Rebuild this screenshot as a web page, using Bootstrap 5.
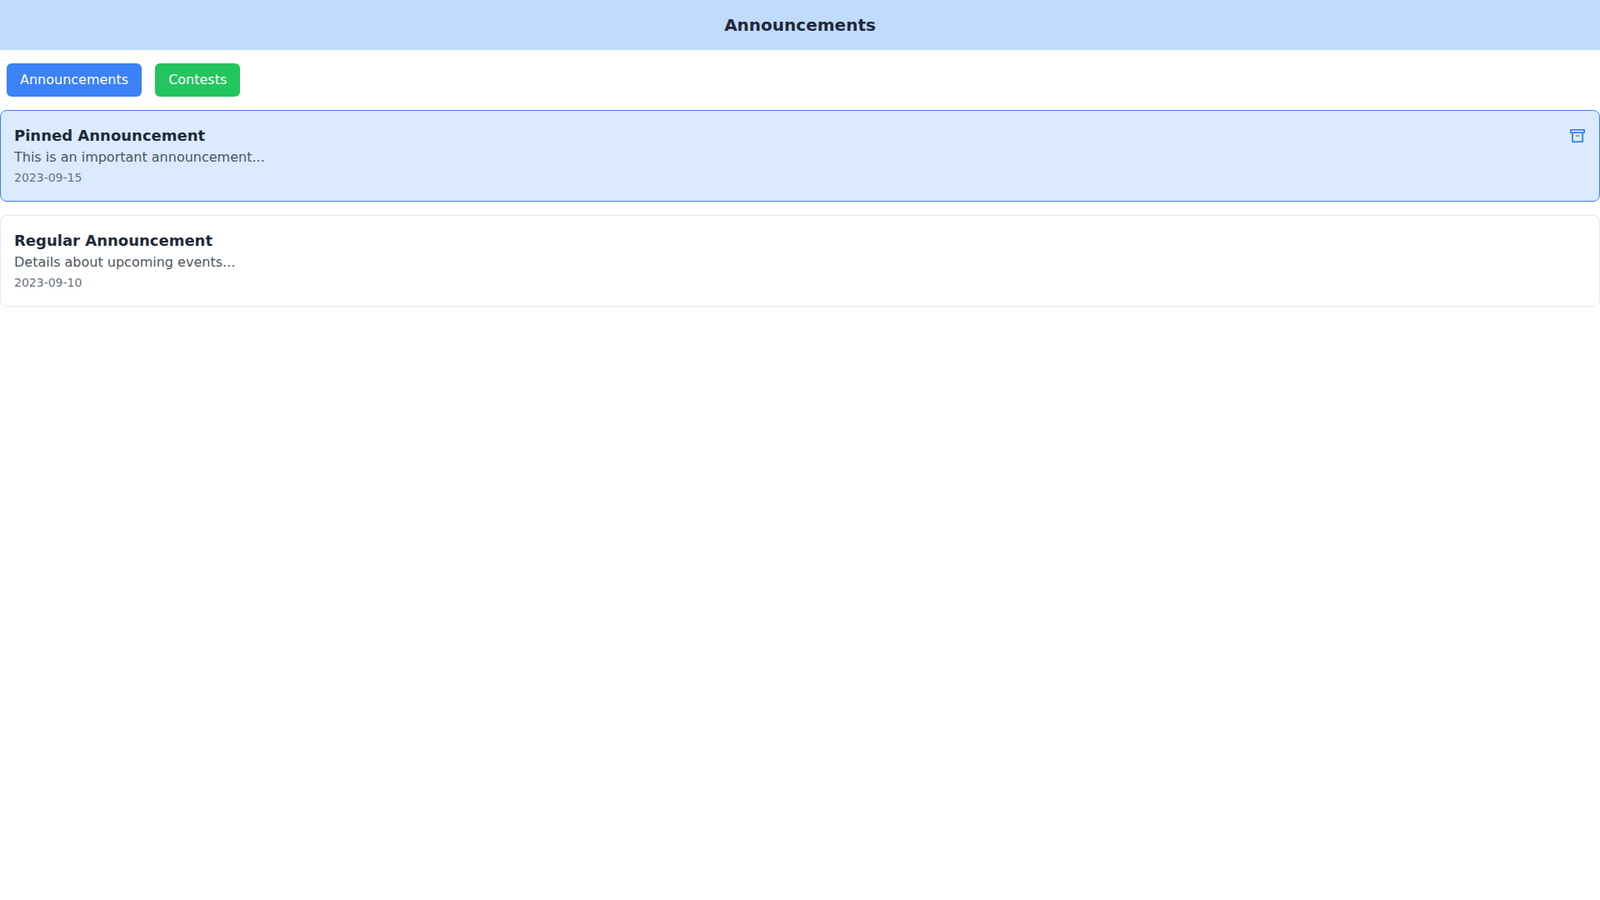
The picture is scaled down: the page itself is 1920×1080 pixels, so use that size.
<!DOCTYPE html>
<html lang="en">
<head>
  <meta charset="UTF-8" />
  <title>Announcements</title>
  <link href="https://cdn.jsdelivr.net/npm/bootstrap@5.3.2/dist/css/bootstrap.min.css" rel="stylesheet" />
  <script src="https://cdn.jsdelivr.net/npm/bootstrap@5.3.2/dist/js/bootstrap.bundle.min.js"></script>
  <style>
    body {
      font-family: "DejaVu Sans", sans-serif;
      font-size: 16px;
      color: #1f2937;
    }
    .top-bar {
      height: 60px;
      background: #bfdbfe;
      font-size: 20px;
      font-weight: 700;
    }
    .tab-btn {
      height: 40px;
      padding: 0 16px;
      font-size: 16px;
      line-height: 24px;
      color: #fff;
      border: 0;
      border-radius: 6px;
    }
    .tab-blue { background: #3b82f6; }
    .tab-green { background: #22c55e; }
    .tabs-row { padding: 16px 8px; gap: 16px; }
    .notice {
      height: 110px;
      padding: 16px;
      border: 1px solid #e5e7eb;
      border-radius: 8px;
      margin-bottom: 16px;
    }
    .notice-pinned {
      background: #dbeafe;
      border-color: #3b82f6;
    }
    .notice-title { font-size: 18px; font-weight: 700; line-height: 28px; color: #1f2937; }
    .notice-body { font-size: 16px; line-height: 24px; color: #4b5563; }
    .notice-date { font-size: 14px; line-height: 20px; margin-top: 2px; color: #6b7280; }
    .pin-icon { width: 20px; height: 20px; color: #3b82f6; }
  </style>
</head>
<body>
  <header class="top-bar d-flex align-items-center justify-content-center">Announcements</header>

  <div class="tabs-row d-flex">
    <button class="tab-btn tab-blue" type="button">Announcements</button>
    <button class="tab-btn tab-green" type="button">Contests</button>
  </div>

  <main>
    <div class="notice notice-pinned d-flex justify-content-between align-items-start">
      <div>
        <div class="notice-title">Pinned Announcement</div>
        <div class="notice-body">This is an important announcement...</div>
        <div class="notice-date">2023-09-15</div>
      </div>
      <svg class="pin-icon mt-1" viewBox="0 0 20 20" fill="none" stroke="currentColor" stroke-width="1.8" stroke-linejoin="round">
        <path fill="#eff6ff" d="M1.9 2.9h16.2v3.2H1.9z"></path>
        <path d="M3.9 6.1v11h12.2v-11"></path>
        <path stroke-opacity=".7" stroke-width="2" d="M8 10h4"></path>
      </svg>
    </div>
    <div class="notice">
      <div class="notice-title">Regular Announcement</div>
      <div class="notice-body">Details about upcoming events...</div>
      <div class="notice-date">2023-09-10</div>
    </div>
  </main>
</body>
</html>
